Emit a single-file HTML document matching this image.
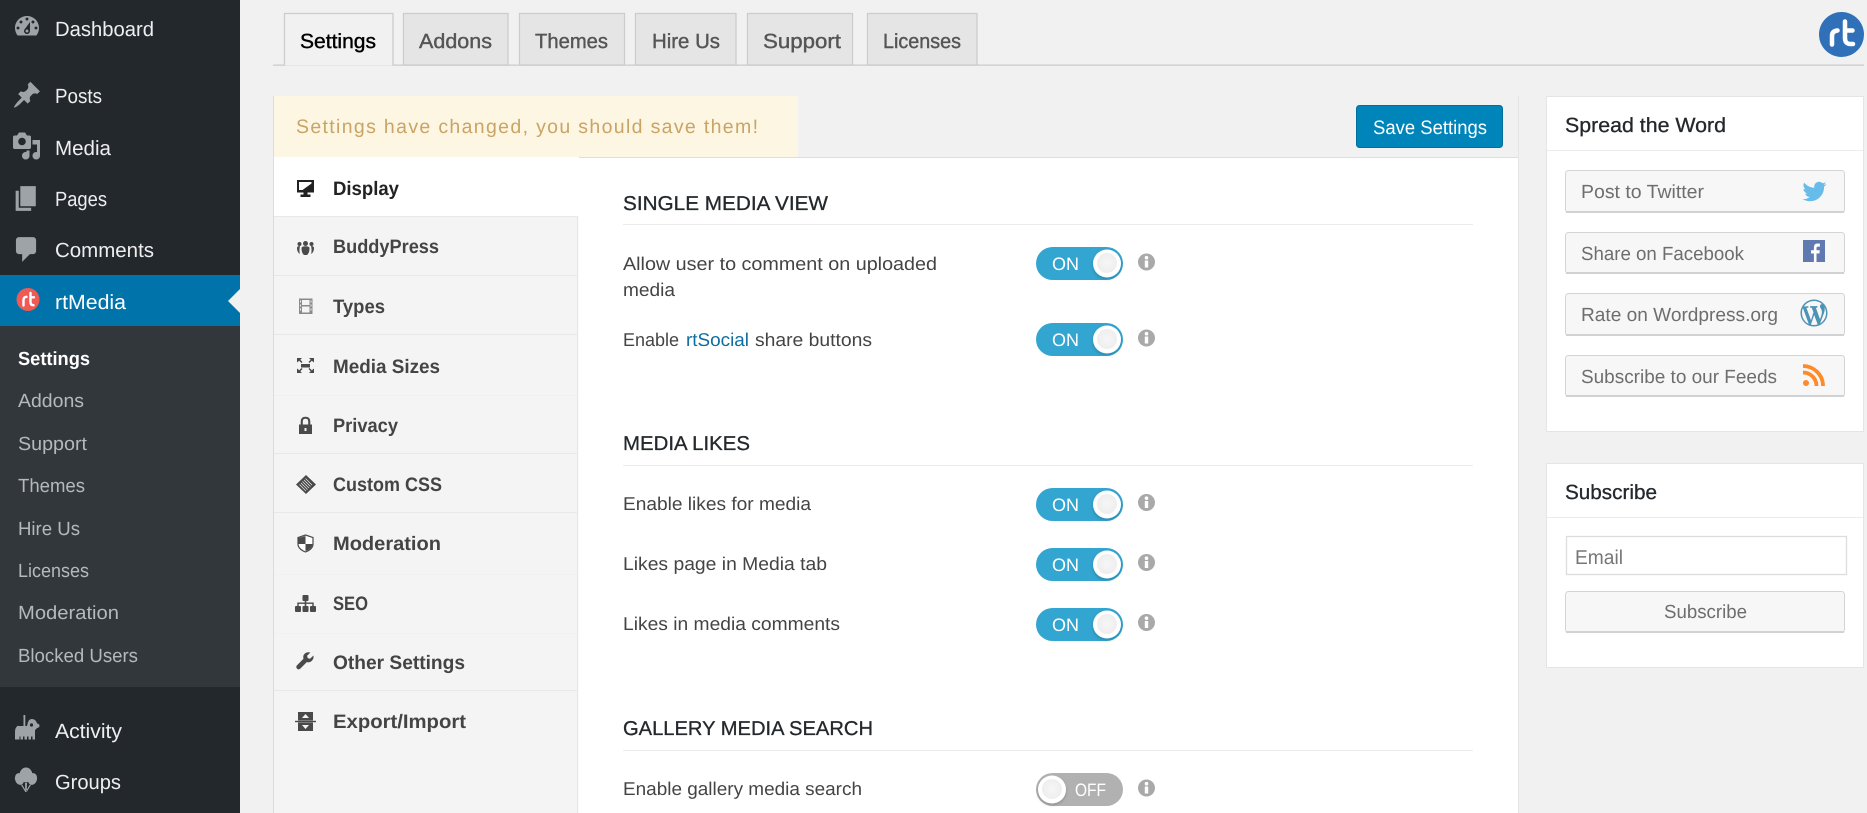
<!DOCTYPE html>
<html lang="en">
<head>
<meta charset="utf-8">
<title>rtMedia Settings</title>
<style>
html,body{margin:0;padding:0;background:#f1f1f1;width:1867px;height:813px;overflow:hidden}
svg{display:block;font-family:"Liberation Sans",Arial,sans-serif;text-rendering:geometricPrecision}
.m{font-size:20.5px;fill:#eee}
.s{font-size:19px;fill:#b4b9be}
.t{font-size:20.5px;fill:#555;stroke:#555;stroke-width:.4px}
.n{font-size:19.5px;font-weight:bold;fill:#444}
.h{font-size:20px;fill:#23282d;stroke:#23282d;stroke-width:.3px}
.l{font-size:18.5px;fill:#444}
.o{font-size:18px;fill:#fff}
.b{font-size:19px;fill:#6e6e6e}
.w{font-size:20.5px;fill:#23282d;stroke:#23282d;stroke-width:.3px}
.ic{fill:#9ea3a8}
.ni{fill:#4a4a4a}
.btn{fill:#f7f7f7;stroke:#d4d4d4;stroke-width:1}
.bs{fill:none;stroke:#d2d2d2;stroke-width:2}
</style>
</head>
<body>
<svg xmlns="http://www.w3.org/2000/svg" width="1867" height="813" viewBox="0 0 1867 813">
<defs>
<symbol id="info" overflow="visible">
<circle cx="0" cy="0" r="8.500" fill="#a9a9a9"/>
<circle cx="0" cy="-4.300" r="1.800" fill="#fff"/>
<rect x="-1.700" y="-1.500" width="3.400" height="7" fill="#fff"/>
</symbol>
<radialGradient id="kn"><stop offset="0" stop-color="#f6f6f6"/><stop offset="1" stop-color="#eeeeee"/></radialGradient>
<filter id="sh" x="-30%" y="-30%" width="160%" height="170%"><feDropShadow dx="0" dy="1.500" stdDeviation="1.500" flood-color="#000" flood-opacity=".2"/></filter>
</defs>

<!-- page -->
<rect width="1867" height="813" fill="#f1f1f1"/>

<!-- admin menu -->
<g>
<rect width="240" height="813" fill="#23282d"/>
<rect y="275" width="240" height="51" fill="#0073aa"/>
<rect y="326" width="240" height="361" fill="#32373c"/>
<path d="M240 289L228 301L240 313Z" fill="#f1f1f1"/>

<path class="ic" fill-rule="evenodd" transform="translate(12 11.500) scale(1.500)" d="M3.760 16h12.480c1.100-1.370 1.760-3.110 1.760-5 0-4.420-3.580-8-8-8s-8 3.580-8 8c0 1.890.66 3.630 1.760 5zM10 4c.55 0 1 .45 1 1s-.45 1-1 1-1-.45-1-1 .45-1 1-1zM6 6c.55 0 1 .45 1 1s-.45 1-1 1-1-.45-1-1 .45-1 1-1zm8 0c.55 0 1 .45 1 1s-.45 1-1 1-1-.45-1-1 .45-1 1-1zm-5.370 5.550L12 7v6c0 1.100-.9 2-2 2s-2-.9-2-2c0-.57.24-1.080.63-1.450zM4 10c.55 0 1 .45 1 1s-.45 1-1 1-1-.45-1-1 .45-1 1-1zm12 0c.55 0 1 .45 1 1s-.45 1-1 1-1-.45-1-1 .45-1 1-1zm-5 3c0-.55-.45-1-1-1s-1 .45-1 1 .45 1 1 1 1-.45 1-1z"/>
<path class="ic" transform="translate(12 80) scale(1.500)" d="M10.440 3.020l1.820-1.820 6.360 6.350-1.830 1.820c-1.050-.68-2.480-.57-3.410.36l-.75.75c-.92.93-1.040 2.350-.35 3.410l-1.830 1.820-2.410-2.410-2.800 2.790c-.42.42-3.380 2.710-3.800 2.290s1.860-3.390 2.280-3.810l2.790-2.790L4.100 9.360l1.830-1.820c1.050.69 2.480.57 3.400-.36l.75-.75c.93-.92 1.050-2.350.36-3.410z"/>
<path class="ic" fill-rule="evenodd" transform="translate(11.500 131) scale(1.500)" d="M13 11V4c0-.55-.45-1-1-1h-1.670L9 1H5L3.670 3H2c-.55 0-1 .45-1 1v7c0 .55.45 1 1 1h10c.55 0 1-.45 1-1zM7 4.500c1.380 0 2.500 1.120 2.500 2.500S8.380 9.500 7 9.500 4.500 8.380 4.500 7 5.620 4.500 7 4.500zM14 6h5v10.500c0 1.380-1.120 2.500-2.500 2.500S14 17.880 14 16.500s1.120-2.500 2.500-2.500c.17 0 .34.02.5.05V9h-3V6zm-4 8.050V13h2v3.500c0 1.380-1.120 2.500-2.500 2.500S7 17.880 7 16.500 8.120 14 9.500 14c.17 0 .34.02.5.05z"/>
<path class="ic" transform="translate(11 183) scale(1.550)" d="M6 15V2h10v13H6zm-1 1h8v2H3V5h2v11z"/>
<path class="ic" transform="translate(11.300 234) scale(1.550)" d="M5 2h9c1.100 0 2 .9 2 2v7c0 1.100-.9 2-2 2h-2l-5 5v-5H5c-1.100 0-2-.9-2-2V4c0-1.100.9-2 2-2z"/>
<circle cx="28" cy="299.500" r="11.500" fill="#ef5b54"/>
<path d="M23.500 305.500v-5.500q0-3 3-3.200M30.500 293v9q0 3.200 3 3.200M30.500 297.300h3.500" fill="none" stroke="#fff" stroke-width="2.400" stroke-linecap="round"/>

<text class="m" x="55" y="36" textLength="99" lengthAdjust="spacingAndGlyphs">Dashboard</text>
<text class="m" x="55" y="103" textLength="47" lengthAdjust="spacingAndGlyphs">Posts</text>
<text class="m" x="55" y="155" textLength="56" lengthAdjust="spacingAndGlyphs">Media</text>
<text class="m" x="55" y="206" textLength="52" lengthAdjust="spacingAndGlyphs">Pages</text>
<text class="m" x="55" y="257" textLength="99" lengthAdjust="spacingAndGlyphs">Comments</text>
<text class="m" x="55" y="309" textLength="71" lengthAdjust="spacingAndGlyphs" style="fill:#fff">rtMedia</text>

<text class="s" x="18" y="365" textLength="72" lengthAdjust="spacingAndGlyphs" style="fill:#fff;font-weight:bold">Settings</text>
<text class="s" x="18" y="407" textLength="66" lengthAdjust="spacingAndGlyphs">Addons</text>
<text class="s" x="18" y="450" textLength="69" lengthAdjust="spacingAndGlyphs">Support</text>
<text class="s" x="18" y="492" textLength="67" lengthAdjust="spacingAndGlyphs">Themes</text>
<text class="s" x="18" y="535" textLength="62" lengthAdjust="spacingAndGlyphs">Hire Us</text>
<text class="s" x="18" y="577" textLength="71" lengthAdjust="spacingAndGlyphs">Licenses</text>
<text class="s" x="18" y="619" textLength="101" lengthAdjust="spacingAndGlyphs">Moderation</text>
<text class="s" x="18" y="662" textLength="120" lengthAdjust="spacingAndGlyphs">Blocked Users</text>

<g class="ic">
<rect x="23.500" y="715" width="1.800" height="14"/>
<path d="M18 726h9l1-4q1-3 4-3t4.500 3l.5 1.500q2.500.3 2.500 2.300t-2.500 2.200q-1 1.500-2 2v9.500h-2.500v-3h-1.500v3h-2.500v-3h-1.500v3h-2.500v-3h-1.500v3h-2.500v-3h-1v3H15v-8q0-4 3-6z"/>
<circle cx="31.500" cy="725" r="1.600" fill="#23282d"/>
<ellipse cx="26" cy="775" rx="6.500" ry="7.500"/>
<ellipse cx="19.500" cy="779" rx="4.500" ry="6" transform="rotate(-15 19.500 779)"/>
<ellipse cx="32.500" cy="779" rx="4.500" ry="6" transform="rotate(15 32.500 779)"/>
<path d="M25 783h2l-.3 9h-1.400zM21 785l1.200-.5 3.800 6.500-.8.700zM31 785l-1.200-.5-3.800 6.500.8.700z"/>
</g>
<text class="m" x="55" y="738" textLength="67" lengthAdjust="spacingAndGlyphs">Activity</text>
<text class="m" x="55" y="789" textLength="66" lengthAdjust="spacingAndGlyphs">Groups</text>
</g>

<!-- tabs -->
<g>
<rect x="273" y="64.500" width="1591" height="1.300" fill="#ccc"/>
<path d="M284.500 65.500V13.500H393V65.500" fill="#f1f1f1" stroke="#ccc" stroke-width="1.300"/>
<rect x="403.500" y="13.500" width="104.500" height="51.500" fill="#e5e5e5" stroke="#ccc" stroke-width="1.300"/>
<rect x="519.500" y="13.500" width="105" height="51.500" fill="#e5e5e5" stroke="#ccc" stroke-width="1.300"/>
<rect x="635.500" y="13.500" width="100.500" height="51.500" fill="#e5e5e5" stroke="#ccc" stroke-width="1.300"/>
<rect x="747.500" y="13.500" width="105" height="51.500" fill="#e5e5e5" stroke="#ccc" stroke-width="1.300"/>
<rect x="867.500" y="13.500" width="109.500" height="51.500" fill="#e5e5e5" stroke="#ccc" stroke-width="1.300"/>
<text class="t" x="300" y="48" textLength="76" lengthAdjust="spacingAndGlyphs" style="fill:#000;stroke:#000">Settings</text>
<text class="t" x="419" y="48" textLength="73" lengthAdjust="spacingAndGlyphs">Addons</text>
<text class="t" x="535" y="48" textLength="73" lengthAdjust="spacingAndGlyphs">Themes</text>
<text class="t" x="652" y="48" textLength="68" lengthAdjust="spacingAndGlyphs">Hire Us</text>
<text class="t" x="763" y="48" textLength="78" lengthAdjust="spacingAndGlyphs">Support</text>
<text class="t" x="883" y="48" textLength="78" lengthAdjust="spacingAndGlyphs">Licenses</text>
<circle cx="1841.500" cy="34.500" r="22.500" fill="#2f70b9"/>
<path d="M1832 44.500V36q0-5 5.500-5.500M1845 21.500V38q0 6 5.500 6h2.500M1845 30.500h7.500" fill="none" stroke="#fff" stroke-width="4.500" stroke-linecap="round"/>
</g>

<!-- main panel -->
<g>
<rect x="273" y="96" width="1246" height="717" fill="#fff"/>
<rect x="273" y="96" width="1246" height="61" fill="#f1f1f1"/>
<rect x="274" y="96" width="524" height="61" fill="#fdf6e3"/>
<rect x="579" y="157" width="940" height="1" fill="#dedede"/>
<rect x="273" y="96" width="1" height="717" fill="#dcdcdc"/>
<rect x="1518" y="96" width="1" height="717" fill="#e5e5e5"/>
<text x="296" y="133" textLength="463" font-size="19.500" fill="#c9a464" style="letter-spacing:1px">Settings have changed, you should save them!</text>
<rect x="1356.500" y="105.500" width="146" height="42" rx="3" fill="#0085ba" stroke="#006f9e"/>
<text x="1373" y="134" textLength="114" lengthAdjust="spacingAndGlyphs" font-size="19.500" fill="#fff">Save Settings</text>
</g>

<!-- left nav -->
<g>
<rect x="274" y="216" width="303.500" height="597" fill="#f4f4f4"/>
<rect x="577" y="216" width="1.200" height="597" fill="#e6e6e6"/>
<g fill="#e8e8e8">
<rect x="274" y="216" width="304" height="1"/>
<rect x="274" y="275" width="304" height="1"/>
<rect x="274" y="334" width="304" height="1"/>
<rect x="274" y="395" width="304" height="1" fill="#f0f0f0"/>
<rect x="274" y="453" width="304" height="1"/>
<rect x="274" y="512" width="304" height="1"/>
<rect x="274" y="574" width="304" height="1" fill="#f1f1f1"/>
<rect x="274" y="633" width="304" height="1" fill="#f1f1f1"/>
<rect x="274" y="690" width="304" height="1"/>
</g>

<!-- buddypress -->
<g class="ni">
<circle cx="305.500" cy="243.500" r="2.500"/><circle cx="299.500" cy="244" r="2"/><circle cx="311.500" cy="244" r="2"/>
<path d="M301.500 248q0-1.800 4-1.800t4 1.800q0 5-2.500 7h-3q-2.500-2-2.500-7z"/>
<path d="M297 248q0-2 3-2-1 3-.2 8-2.800-2-2.800-6zM314 248q0-2-3-2 1 3 .2 8 2.800-2 2.800-6z"/>
</g>
<!-- types -->
<path fill="#8a8a8a" fill-rule="evenodd" d="M299 298.500h13.500v15.500h-13.500zM302 300v12.500h7.500V300z"/>
<path fill="#8a8a8a" d="M302 305h7.500v1.500h-7.500z"/>
<path fill="#f4f4f4" d="M300 300.500h1v2h-1zM300 304.500h1v2h-1zM300 308.500h1v2h-1zM310.500 300.500h1v2h-1zM310.500 304.500h1v2h-1zM310.500 308.500h1v2h-1z"/>
<!-- sizes -->
<g class="ni">
<rect x="301" y="364" width="9" height="3.500"/>
<path d="M297 358h5l-1.700 1.700 2.200 2.300-1 1-2.300-2.200-2.200 1.700zM314 358h-5l1.700 1.700-2.200 2.300 1 1 2.300-2.200 2.200 1.700zM297 373h5l-1.700-1.700 2.200-2.300-1-1-2.300 2.200-2.200-1.700zM314 373h-5l1.700-1.700-2.200-2.300 1-1 2.300 2.200 2.200-1.700z"/>
</g>
<!-- privacy -->
<path class="ni" fill-rule="evenodd" d="M299 424.500h1.700v-3q0-4.800 4.800-4.800t4.800 4.800v3h1.700V434h-13zM302.800 424.500h5.400v-3q0-2.700-2.700-2.700t-2.700 2.700zM304.500 428v3h2v-3z"/>
<!-- css -->
<g class="ni">
<path d="M306 475l10 9.500-10 9.500-10-9.500z"/>
<path d="M299.500 484.500l6.500 6.500M301 483l6.500 6.500M302.500 481.500l6.500 6.500M304 480l6.500 6.500M305.500 478.500l6.500 6.500" stroke="#f4f4f4" stroke-width=".6" fill="none"/>
</g>
<!-- moderation -->
<path d="M305.500 535l7.500 2.500v6.500q0 5-7.500 8-7.500-3-7.500-8v-6.500z" fill="#fff" stroke="#4a4a4a" stroke-width="1.200"/>
<path class="ni" d="M305.500 536v8h-7v-6zM305.500 544h7q0 4.500-7 7.200z"/>
<!-- seo -->
<g class="ni">
<rect x="302.500" y="595" width="6" height="6" rx="1"/>
<rect x="295" y="606" width="6" height="6" rx="1"/><rect x="302.500" y="606" width="6" height="6" rx="1"/><rect x="310" y="606" width="6" height="6" rx="1"/>
<path d="M297.300 606v-3.500h7.400V600h1.600v2.500h7.400v3.500h-1.400v-2.100h-6v2.100h-1.600v-2.100h-6v2.100z"/>
</g>
<!-- wrench -->
<path class="ni" d="M313.500 655.500l-3.500 3.200-2.300-.6-.6-2.300 3.300-3.300q-3.500-1-5.800 1.300-2 2.100-1.100 5l-6.500 6.500q-1.500 1.700 0 3.300t3.300 0l6.500-6.500q3 .8 5-1.200 2.200-2.300 1.700-5.400z"/>
<!-- export -->
<g class="ni">
<rect x="298" y="712" width="15" height="8.500"/>
<rect x="298" y="722.500" width="15" height="8.500"/>
<rect x="295" y="720.800" width="21" height="1.400"/>
<path d="M305.500 714l3.500 4h-7z" fill="#f4f4f4"/><path d="M305.500 729l3.500-4h-7z" fill="#f4f4f4"/>
</g>

<rect x="274" y="157" width="304" height="59" fill="#fff"/>
<!-- display -->
<path fill="#222" d="M297 180h17v12.500h-6.500v2h3v2.500h-10v-2.500h3v-2h-6.500z"/>
<path fill="#fff" d="M299 182h12.500v1.500l-9 6.500h-3.500z"/>

<text class="n" x="333" y="195" textLength="66" lengthAdjust="spacingAndGlyphs" style="fill:#222">Display</text>
<text class="n" x="333" y="253" textLength="106" lengthAdjust="spacingAndGlyphs">BuddyPress</text>
<text class="n" x="333" y="313" textLength="52" lengthAdjust="spacingAndGlyphs">Types</text>
<text class="n" x="333" y="373" textLength="107" lengthAdjust="spacingAndGlyphs">Media Sizes</text>
<text class="n" x="333" y="432" textLength="65" lengthAdjust="spacingAndGlyphs">Privacy</text>
<text class="n" x="333" y="491" textLength="109" lengthAdjust="spacingAndGlyphs">Custom CSS</text>
<text class="n" x="333" y="550" textLength="108" lengthAdjust="spacingAndGlyphs">Moderation</text>
<text class="n" x="333" y="610" textLength="35" lengthAdjust="spacingAndGlyphs">SEO</text>
<text class="n" x="333" y="669" textLength="132" lengthAdjust="spacingAndGlyphs">Other Settings</text>
<text class="n" x="333" y="728" textLength="133" lengthAdjust="spacingAndGlyphs">Export/Import</text>
</g>

<!-- content -->
<g>
<g fill="#ececec">
<rect x="623" y="224" width="850" height="1"/>
<rect x="623" y="465" width="850" height="1"/>
<rect x="623" y="750" width="850" height="1"/>
</g>
<text class="h" x="623" y="210" textLength="205" lengthAdjust="spacingAndGlyphs">SINGLE MEDIA VIEW</text>
<text class="h" x="623" y="450" textLength="127" lengthAdjust="spacingAndGlyphs">MEDIA LIKES</text>
<text class="h" x="623" y="735" textLength="250" lengthAdjust="spacingAndGlyphs">GALLERY MEDIA SEARCH</text>

<text class="l" x="623" y="270" textLength="314" lengthAdjust="spacingAndGlyphs">Allow user to comment on uploaded</text>
<text class="l" x="623" y="296" textLength="52" lengthAdjust="spacingAndGlyphs">media</text>
<text class="l" x="623" y="346" textLength="56" lengthAdjust="spacingAndGlyphs">Enable</text>
<text class="l" x="686" y="346" textLength="63" lengthAdjust="spacingAndGlyphs" style="fill:#0e6ea0">rtSocial</text>
<text class="l" x="755" y="346" textLength="117" lengthAdjust="spacingAndGlyphs">share buttons</text>
<text class="l" x="623" y="510" textLength="188" lengthAdjust="spacingAndGlyphs">Enable likes for media</text>
<text class="l" x="623" y="570" textLength="204" lengthAdjust="spacingAndGlyphs">Likes page in Media tab</text>
<text class="l" x="623" y="630" textLength="217" lengthAdjust="spacingAndGlyphs">Likes in media comments</text>
<text class="l" x="623" y="795" textLength="239" lengthAdjust="spacingAndGlyphs">Enable gallery media search</text>

<!-- toggles -->
<g>
<rect x="1036" y="247" width="87" height="33" rx="16.500" fill="#33a5d1"/>
<text class="o" x="1052" y="270" textLength="27" lengthAdjust="spacingAndGlyphs">ON</text>
<circle cx="1107" cy="263.500" r="14" fill="#fff" filter="url(#sh)"/><circle cx="1107" cy="263" r="10" fill="url(#kn)"/>
<use href="#info" x="1146.500" y="262"/>

<rect x="1036" y="323" width="87" height="33" rx="16.500" fill="#33a5d1"/>
<text class="o" x="1052" y="346" textLength="27" lengthAdjust="spacingAndGlyphs">ON</text>
<circle cx="1107" cy="339.500" r="14" fill="#fff" filter="url(#sh)"/><circle cx="1107" cy="339" r="10" fill="url(#kn)"/>
<use href="#info" x="1146.500" y="338"/>

<rect x="1036" y="488" width="87" height="33" rx="16.500" fill="#33a5d1"/>
<text class="o" x="1052" y="511" textLength="27" lengthAdjust="spacingAndGlyphs">ON</text>
<circle cx="1107" cy="504.500" r="14" fill="#fff" filter="url(#sh)"/><circle cx="1107" cy="504" r="10" fill="url(#kn)"/>
<use href="#info" x="1146.500" y="502.500"/>

<rect x="1036" y="548" width="87" height="33" rx="16.500" fill="#33a5d1"/>
<text class="o" x="1052" y="571" textLength="27" lengthAdjust="spacingAndGlyphs">ON</text>
<circle cx="1107" cy="564.500" r="14" fill="#fff" filter="url(#sh)"/><circle cx="1107" cy="564" r="10" fill="url(#kn)"/>
<use href="#info" x="1146.500" y="562.500"/>

<rect x="1036" y="608" width="87" height="33" rx="16.500" fill="#33a5d1"/>
<text class="o" x="1052" y="631" textLength="27" lengthAdjust="spacingAndGlyphs">ON</text>
<circle cx="1107" cy="624.500" r="14" fill="#fff" filter="url(#sh)"/><circle cx="1107" cy="624" r="10" fill="url(#kn)"/>
<use href="#info" x="1146.500" y="622.500"/>

<rect x="1036" y="773" width="87" height="33" rx="16.500" fill="#b1b1b1"/>
<text class="o" x="1075" y="796" textLength="31" lengthAdjust="spacingAndGlyphs">OFF</text>
<circle cx="1052" cy="789.500" r="14" fill="#fff" filter="url(#sh)"/><circle cx="1052" cy="789" r="10" fill="url(#kn)"/>
<use href="#info" x="1146.500" y="788"/>
</g>
</g>

<!-- spread the word -->
<g>
<rect x="1546.500" y="96.500" width="317" height="335" fill="#fff" stroke="#e5e5e5"/>
<rect x="1547" y="150" width="316" height="1" fill="#ececec"/>
<text class="w" x="1565" y="132" textLength="161" lengthAdjust="spacingAndGlyphs">Spread the Word</text>

<rect x="1565.500" y="170.500" width="279" height="42" rx="3" class="btn"/>
<path class="bs" d="M1566 212h278"/>
<rect x="1565.500" y="232.500" width="279" height="41" rx="3" class="btn"/>
<path class="bs" d="M1566 273h278"/>
<rect x="1565.500" y="293.500" width="279" height="42" rx="3" class="btn"/>
<path class="bs" d="M1566 335h278"/>
<rect x="1565.500" y="355.500" width="279" height="41" rx="3" class="btn"/>
<path class="bs" d="M1566 396h278"/>
<text class="b" x="1581" y="198" textLength="123" lengthAdjust="spacingAndGlyphs">Post to Twitter</text>
<text class="b" x="1581" y="260" textLength="163" lengthAdjust="spacingAndGlyphs">Share on Facebook</text>
<text class="b" x="1581" y="321" textLength="197" lengthAdjust="spacingAndGlyphs">Rate on Wordpress.org</text>
<text class="b" x="1581" y="383" textLength="196" lengthAdjust="spacingAndGlyphs">Subscribe to our Feeds</text>

<path fill="#68bce9" transform="translate(1802.500 179.500)" d="M23.953 4.570a10 10 0 01-2.825.775 4.958 4.958 0 002.163-2.723c-.951.555-2.005.959-3.127 1.184a4.920 4.920 0 00-8.384 4.482C7.690 8.095 4.067 6.130 1.640 3.162a4.822 4.822 0 00-.666 2.475c0 1.710.87 3.213 2.188 4.096a4.904 4.904 0 01-2.228-.616v.06a4.923 4.923 0 003.946 4.827 4.996 4.996 0 01-2.212.085 4.936 4.936 0 004.604 3.417 9.867 9.867 0 01-6.102 2.105c-.39 0-.779-.023-1.170-.067a13.995 13.995 0 007.557 2.209c9.053 0 13.998-7.496 13.998-13.985 0-.21 0-.42-.015-.63A9.935 9.935 0 0024 4.590z"/>
<rect x="1803" y="240" width="22" height="22" fill="#6079b0"/>
<path fill="#fff" d="M1816.500 262v-8.500h2.900l.4-3.300h-3.300v-2.100q0-1.500 1.600-1.500h1.800v-3q-1-.1-2.500-.1-3.500 0-3.500 3.900v2.800h-2.900v3.300h2.900v8.500z"/>
<path fill="#4c93b6" fill-rule="evenodd" transform="translate(1800.500 299.500) scale(1.350)" d="M20 10c0-5.510-4.490-10-10-10C4.480 0 0 4.490 0 10c0 5.520 4.480 10 10 10 5.510 0 10-4.480 10-10zM7.780 15.370L4.370 6.220c.55-.02 1.170-.08 1.170-.08.5-.06.44-1.130-.06-1.110 0 0-1.450.11-2.370.11-.18 0-.37 0-.58-.01C4.120 2.690 6.870 1.110 10 1.110c2.330 0 4.450.87 6.050 2.340-.68-.11-1.650.39-1.650 1.580 0 .74.45 1.360.9 2.100.35.61.55 1.360.55 2.460 0 1.490-1.400 5-1.400 5l-3.030-8.370c.54-.02.82-.17.82-.17.5-.05.44-1.250-.06-1.220 0 0-1.440.12-2.380.12-.87 0-2.330-.12-2.330-.12-.5-.03-.56 1.200-.06 1.220l.92.08 1.260 3.410zM17.410 10c.24-.64.74-1.870.43-4.250.7 1.290 1.050 2.710 1.050 4.250 0 3.290-1.730 6.240-4.400 7.780.97-2.590 1.940-5.200 2.920-7.780zM6.100 18.090C3.120 16.650 1.110 13.530 1.110 10c0-1.300.23-2.480.72-3.590C3.250 10.300 4.670 14.200 6.100 18.090zm4.030-6.630l2.580 6.980c-.86.29-1.760.45-2.710.45-.79 0-1.570-.11-2.290-.33.81-2.380 1.620-4.740 2.420-7.100z"/>
<circle cx="1806" cy="383" r="3" fill="#ff8a2a"/>
<path d="M1803 372.500a13.500 13.500 0 0 1 13.500 13.500M1803 366a20 20 0 0 1 20 20" fill="none" stroke="#ff8a2a" stroke-width="3.800"/>
</g>

<!-- subscribe -->
<g>
<rect x="1546.500" y="463.500" width="317" height="204" fill="#fff" stroke="#e5e5e5"/>
<rect x="1547" y="517" width="316" height="1" fill="#ececec"/>
<text class="w" x="1565" y="499" textLength="92" lengthAdjust="spacingAndGlyphs">Subscribe</text>
<rect x="1566.500" y="536.500" width="280" height="38" fill="#fff" stroke="#ddd" stroke-width="1.300"/>
<text x="1575" y="564" textLength="48" lengthAdjust="spacingAndGlyphs" font-size="20" fill="#777">Email</text>
<rect x="1565.500" y="591.500" width="279" height="41" rx="3" class="btn"/>
<path class="bs" d="M1566 632h278"/>
<text class="b" x="1664" y="618" textLength="83" lengthAdjust="spacingAndGlyphs">Subscribe</text>
</g>
</svg>
</body>
</html>
